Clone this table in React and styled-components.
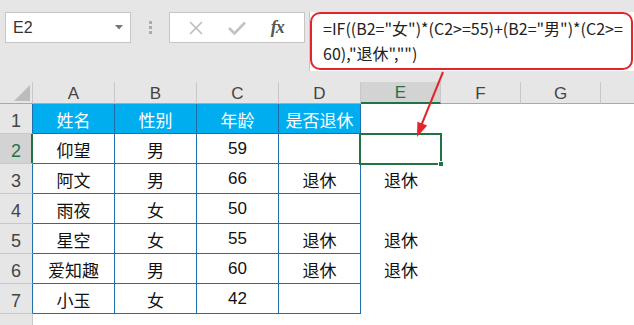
import React from "react";
import styled, { createGlobalStyle, css } from "styled-components";

const GlobalStyle = createGlobalStyle`
  html, body {
    margin: 0;
    padding: 0;
    background: #ffffff;
    overflow: hidden;
  }
  * {
    box-sizing: border-box;
  }
`;

const CJK = `"Noto Sans CJK SC", "Liberation Sans", sans-serif`;
const GREEN = "#217346";
const BLUE_LINE = "#1d6fab";

const Window = styled.div`
  position: relative;
  width: 634px;
  height: 325px;
  overflow: hidden;
  background: #ffffff;
  font-family: "Liberation Sans", Arial, sans-serif;
`;

const FormulaBar = styled.div`
  height: 82px;
  background: #e6e6e6;
  display: flex;
  align-items: flex-start;
  padding: 12px 0 0 5px;
`;

const NameBox = styled.div`
  width: 126px;
  height: 31px;
  background: #fff;
  border: 1px solid #c6c6c6;
  display: flex;
  align-items: center;
  justify-content: space-between;
  padding: 0 7px 0 7px;
  font-size: 16px;
  color: #333;
`;

const Grip = styled.div`
  width: 38px;
  height: 31px;
  display: flex;
  flex-direction: column;
  align-items: center;
  justify-content: center;
  gap: 2px;

  span {
    width: 3px;
    height: 3px;
    background: #ababab;
  }
`;

const FxBox = styled.div`
  width: 136px;
  height: 31px;
  background: #fff;
  border: 1px solid #c6c6c6;
  display: flex;
  align-items: center;
  justify-content: space-around;
  padding: 0 8px 0 6px;
`;

const FxLabel = styled.span`
  font-family: "Liberation Serif", serif;
  font-style: italic;
  font-weight: bold;
  font-size: 18px;
  color: #555;
  letter-spacing: -1px;
`;

const FormulaBox = styled.div`
  flex: 1;
  margin-left: 4px;
  height: 59px;
  background: #fff;
  border-left: 1px solid #c6c6c6;
  padding: 0 1px 1px 0;
`;

const RedFrame = styled.div`
  height: 100%;
  border: 2px solid #e3252a;
  border-radius: 10px;
  padding: 2px 6px 0 11px;
  font-family: ${CJK};
  font-size: 16px;
  line-height: 25px;
  color: #222;
  white-space: nowrap;
`;

const Sheet = styled.div`
  display: grid;
  grid-template-columns: 33px 82px 82px 82px 82px 80px 80px 80px 80px;
  grid-template-rows: 22px repeat(8, 30px);
`;

const Corner = styled.div`
  background: #e6e6e6;
  border-right: 1px solid #c8c8c8;
  border-bottom: 1px solid #a9a9a9;
  display: flex;
  align-items: flex-end;
  justify-content: flex-end;
  padding: 0 2px 2px 0;
`;

const ColHead = styled.div`
  background: ${(p) => (p.$active ? "#d3d3d3" : "#e6e6e6")};
  border-right: 1px solid #c8c8c8;
  border-bottom: ${(p) => (p.$active ? `2px solid ${GREEN}` : "1px solid #a9a9a9")};
  color: ${(p) => (p.$active ? GREEN : "#444")};
  font-size: 17px;
  display: flex;
  align-items: center;
  justify-content: center;
  padding-top: 2px;
`;

const RowHead = styled.div`
  background: ${(p) => (p.$active ? "#d3d3d3" : "#e6e6e6")};
  border-bottom: 1px solid #c8c8c8;
  border-right: 1px solid ${(p) => p.$edge};
  box-shadow: ${(p) => (p.$active ? `inset -1px 0 0 ${GREEN}` : "none")};
  color: ${(p) => (p.$active ? GREEN : "#444")};
  font-size: 18px;
  display: flex;
  align-items: flex-end;
  justify-content: center;
  padding-bottom: 1px;
`;

const Cell = styled.div`
  position: relative;
  display: flex;
  align-items: center;
  justify-content: center;
  font-family: ${CJK};
  font-size: 17px;
  color: #111;
  padding-top: 1px;

  ${(p) =>
    p.$table &&
    css`
      border-right: 1px solid ${BLUE_LINE};
      border-bottom: 1px solid ${BLUE_LINE};
    `}

  ${(p) =>
    p.$head &&
    css`
      background: #00aeef;
      color: #fff;
    `}

  ${(p) =>
    p.$num &&
    css`
      font-family: "Liberation Sans", Arial, sans-serif;
    `}
`;

const Selection = styled.div`
  position: absolute;
  top: -1px;
  left: -2px;
  right: -1px;
  bottom: -1px;
  border: 2px solid ${GREEN};
  z-index: 2;
`;

const FillHandle = styled.div`
  position: absolute;
  right: -4px;
  bottom: -4px;
  width: 6px;
  height: 6px;
  background: ${GREEN};
  border: 1px solid #fff;
`;

const Arrow = styled.svg`
  position: absolute;
  left: 0;
  top: 0;
  pointer-events: none;
  z-index: 5;
`;

// the last column runs past the window edge, so its letter never shows
const columns = ["A", "B", "C", "D", "E", "F", "G", ""];

const header = ["姓名", "性别", "年龄", "是否退休"];

const people = [
  ["仰望", "男", "59", "", ""],
  ["阿文", "男", "66", "退休", "退休"],
  ["雨夜", "女", "50", "", ""],
  ["星空", "女", "55", "退休", "退休"],
  ["爱知趣", "男", "60", "退休", "退休"],
  ["小玉", "女", "42", "", ""],
];

function ChevronDown() {
  return (
    <svg width="8" height="5" viewBox="0 0 8 5">
      <path d="M0 0 H8 L4 4.5 Z" fill="#777" />
    </svg>
  );
}

function CancelIcon() {
  return (
    <svg width="16" height="16" viewBox="0 0 16 16">
      <path d="M2 2 L14 14 M14 2 L2 14" stroke="#bdbdbd" strokeWidth="1.6" fill="none" />
    </svg>
  );
}

function EnterIcon() {
  return (
    <svg width="18" height="14" viewBox="0 0 18 14">
      <path d="M1 7 L6.5 12.5 L17 1.5" stroke="#c2c2c2" strokeWidth="2.6" fill="none" />
    </svg>
  );
}

function CornerMark() {
  return (
    <svg width="16" height="16" viewBox="0 0 16 16">
      <path d="M16 0 V16 H0 Z" fill="#bcbcbc" />
    </svg>
  );
}

function DataRow({ index, values }) {
  const rowNo = index + 2;
  const active = rowNo === 2;
  return (
    <>
      <RowHead $active={active} $edge={active ? GREEN : BLUE_LINE}>
        {rowNo}
      </RowHead>
      {values.slice(0, 4).map((v, i) => (
        <Cell key={i} $table $num={i === 2}>
          {v}
        </Cell>
      ))}
      <Cell>
        {values[4]}
        {active && (
          <Selection>
            <FillHandle />
          </Selection>
        )}
      </Cell>
      <Cell />
      <Cell />
      <Cell />
    </>
  );
}

export default function App() {
  return (
    <Window>
      <GlobalStyle />
      <FormulaBar>
        <NameBox>
          <span>E2</span>
          <ChevronDown />
        </NameBox>
        <Grip>
          <span />
          <span />
          <span />
        </Grip>
        <FxBox>
          <CancelIcon />
          <EnterIcon />
          <FxLabel>fx</FxLabel>
        </FxBox>
        <FormulaBox>
          <RedFrame>
            <div>=IF((B2="女")*(C2&gt;=55)+(B2="男")*(C2&gt;=</div>
            <div>60),"退休","")</div>
          </RedFrame>
        </FormulaBox>
      </FormulaBar>

      <Sheet>
        <Corner>
          <CornerMark />
        </Corner>
        {columns.map((c, i) => (
          <ColHead key={i} $active={c === "E"}>
            {c}
          </ColHead>
        ))}

        <RowHead $edge={BLUE_LINE}>1</RowHead>
        {header.map((h) => (
          <Cell key={h} $table $head>
            {h}
          </Cell>
        ))}
        <Cell />
        <Cell />
        <Cell />
        <Cell />

        {people.map((p, i) => (
          <DataRow key={i} index={i} values={p} />
        ))}

        {/* row 8 is cut by the window bottom; only its header strip shows */}
        <RowHead $edge="#c8c8c8" />
      </Sheet>

      <Arrow width="634" height="325" viewBox="0 0 634 325">
        <line x1="443" y1="72" x2="421" y2="126" stroke="#e3252a" strokeWidth="2" />
        <path d="M417 137 L427.2 125.6 L417.4 121.8 Z" fill="#e3252a" />
      </Arrow>
    </Window>
  );
}
